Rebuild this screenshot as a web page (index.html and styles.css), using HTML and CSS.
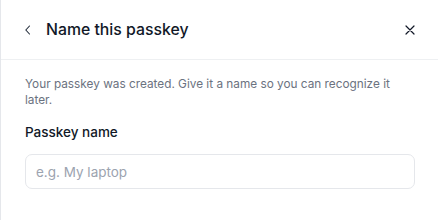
FILE: index.html
```html
<!DOCTYPE html>
<html lang="en">
<head>
  <meta charset="UTF-8" />
  <meta name="viewport" content="width=device-width, initial-scale=1.0" />
  <title>Name this passkey</title>
  <link rel="stylesheet" href="styles.css">
</head>
<body>
  <div class="panel">
    <header class="panel-header">
      <button class="icon-btn back" aria-label="Back">
        <svg width="10" height="10" viewBox="0 0 10 10"><path d="M6.5 1 L2.8 5 L6.5 9" fill="none" stroke="#1f2937" stroke-width="1.1" stroke-linecap="round" stroke-linejoin="round"/></svg>
      </button>
      <h1 class="title">Name this passkey</h1>
      <button class="icon-btn close" aria-label="Close">
        <svg width="10" height="10" viewBox="0 0 10 10"><path d="M1 1 L9 9 M9 1 L1 9" fill="none" stroke="#111827" stroke-width="1.2" stroke-linecap="round"/></svg>
      </button>
    </header>
    <main class="panel-body">
      <p class="desc">Your passkey was created. Give it a name so you can recognize it later.</p>
      <label class="label" for="name">Passkey name</label>
      <input class="input" id="name" type="text" placeholder="e.g. My laptop" />
    </main>
  </div>
</body>
</html>
```

FILE: styles.css
```css
body {
  margin: 0;
  font-family: Inter, 'Noto Sans', sans-serif;
  background: #ffffff;
  color: #111827;
}
.panel {
  border-left: 1px solid #e5e7eb;
  min-height: 220px;
  box-sizing: border-box;
}
.panel-header {
  display: flex;
  align-items: center;
  height: 59px;
  padding: 0 23px 0 22px;
  border-bottom: 1px solid #eef0f2;
}
.icon-btn {
  border: 0;
  background: none;
  padding: 0;
  width: 10px;
  height: 10px;
  display: flex;
  cursor: pointer;
}
.title {
  flex: 1;
  margin: 0 0 0 13px;
  font-size: 15.8px;
  font-weight: 500;
  color: #111827;
}
.panel-body {
  padding: 16px 23px 0 24px;
  display: flex;
  flex-direction: column;
}
.desc {
  margin: 0;
  font-size: 11.8px;
  line-height: 16px;
  color: #6b7280;
}
.label {
  margin-top: 14px;
  font-size: 13.5px;
  line-height: 20px;
  font-weight: 500;
  color: #111827;
}
.input {
  margin-top: 12px;
  height: 35px;
  box-sizing: border-box;
  border: 1px solid #e5e7eb;
  border-radius: 7px;
  padding: 0 10px;
  font-family: inherit;
  font-size: 13.5px;
  color: #111827;
  outline: none;
}
.input::placeholder {
  color: #9ca3af;
}
```
